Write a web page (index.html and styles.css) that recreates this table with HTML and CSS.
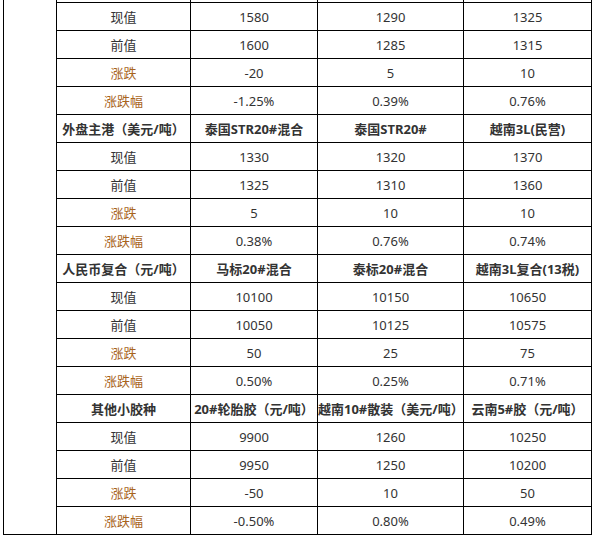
FILE: index.html
```html
<!DOCTYPE html>
<html lang="zh">
<head>
<meta charset="utf-8">
<link rel="stylesheet" href="styles.css">
</head>
<body>
<div class="wrap">
<table class="price">
<colgroup>
<col class="c0"><col class="c1"><col class="c2"><col class="c3"><col class="c4">
</colgroup>
<tbody>
<tr><td class="side" rowspan="20"></td><td></td><td></td><td></td><td></td></tr>
<tr><td>现值</td><td>1580</td><td>1290</td><td>1325</td></tr>
<tr><td>前值</td><td>1600</td><td>1285</td><td>1315</td></tr>
<tr><td class="chg">涨跌</td><td>-20</td><td>5</td><td>10</td></tr>
<tr><td class="chg">涨跌幅</td><td>-1.25%</td><td>0.39%</td><td>0.76%</td></tr>
<tr class="head"><td>外盘主港（美元/吨）</td><td>泰国STR20#混合</td><td>泰国STR20#</td><td>越南3L(民营)</td></tr>
<tr><td>现值</td><td>1330</td><td>1320</td><td>1370</td></tr>
<tr><td>前值</td><td>1325</td><td>1310</td><td>1360</td></tr>
<tr><td class="chg">涨跌</td><td>5</td><td>10</td><td>10</td></tr>
<tr><td class="chg">涨跌幅</td><td>0.38%</td><td>0.76%</td><td>0.74%</td></tr>
<tr class="head"><td>人民币复合（元/吨）</td><td>马标20#混合</td><td>泰标20#混合</td><td>越南3L复合(13税)</td></tr>
<tr><td>现值</td><td>10100</td><td>10150</td><td>10650</td></tr>
<tr><td>前值</td><td>10050</td><td>10125</td><td>10575</td></tr>
<tr><td class="chg">涨跌</td><td>50</td><td>25</td><td>75</td></tr>
<tr><td class="chg">涨跌幅</td><td>0.50%</td><td>0.25%</td><td>0.71%</td></tr>
<tr class="head"><td>其他小胶种</td><td>20#轮胎胶（元/吨）</td><td>越南10#散装（美元/吨）</td><td>云南5#胶（元/吨）</td></tr>
<tr><td>现值</td><td>9900</td><td>1260</td><td>10250</td></tr>
<tr><td>前值</td><td>9950</td><td>1250</td><td>10200</td></tr>
<tr><td class="chg">涨跌</td><td>-50</td><td>10</td><td>50</td></tr>
<tr><td class="chg">涨跌幅</td><td>-0.50%</td><td>0.80%</td><td>0.49%</td></tr>
</tbody>
</table>
</div>
</body>
</html>
```
FILE: styles.css
```css
html, body {
  margin: 0;
  padding: 0;
  background: #fff;
}
.wrap {
  padding-left: 3px;
  overflow: hidden;
  height: 539px;
}
.price {
  border-collapse: collapse;
  table-layout: fixed;
  width: 588px;
  margin-top: -26px;
  font-family: "Noto Sans", "Noto Sans CJK SC", sans-serif;
  font-size: 13px;
  color: #333;
}
.c0 { width: 53px; }
.c1 { width: 134px; }
.c2 { width: 127px; }
.c3 { width: 146px; }
.c4 { width: 128px; }
.price td {
  border: 1px solid #000;
  height: 27px;
  padding: 0;
  text-align: center;
  vertical-align: middle;
  white-space: nowrap;
  line-height: 18px;
}
.price td.chg {
  color: #a8641c;
}
.head td {
  font-weight: bold;
}
```
